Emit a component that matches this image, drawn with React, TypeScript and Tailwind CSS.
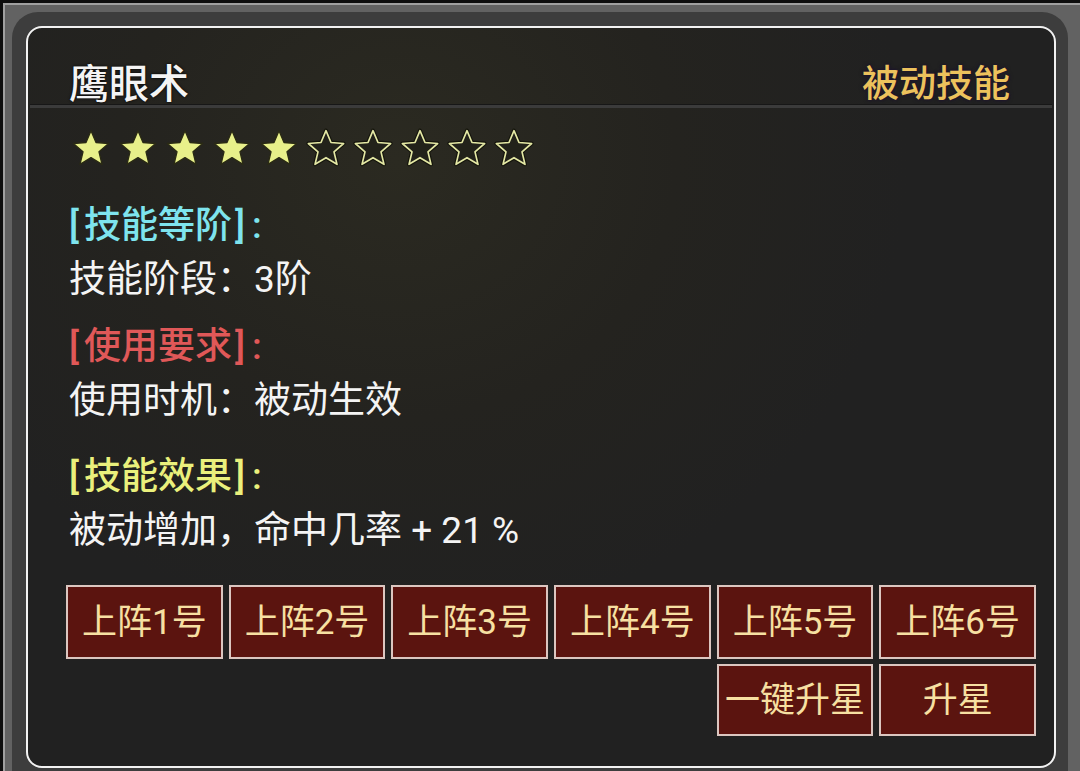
import React from "react";

const STAR =
  "M12 1.6l3 7.1 7.6.6-5.8 5 1.8 7.5L12 17.8l-6.6 4 1.8-7.5-5.8-5 7.6-.6z";

const Star = ({ filled }: { filled: boolean }) => (
  <svg width="40" height="40" viewBox="0 0 24 24">
    {filled ? (
      <path d={STAR} fill="#e8f08a" stroke="#2a2a14" strokeWidth="0.8" strokeLinejoin="round" />
    ) : (
      <>
        <path d={STAR} fill="none" stroke="#15150c" strokeWidth="2.4" strokeLinejoin="round" />
        <path d={STAR} fill="#22221a" stroke="#e4e8a4" strokeWidth="1" strokeLinejoin="round" />
      </>
    )}
  </svg>
);

// section heading like [技能等阶]:
const Heading = ({ text, color, className }: { text: string; color: string; className?: string }) => (
  <div className={`font-medium ${color} ${className ?? ""}`}>
    <span className="mr-[5px]">[</span>
    {text}
    <span className="ml-[3px] mr-[7px]">]</span>:
  </div>
);

const buttons = ["上阵1号", "上阵2号", "上阵3号", "上阵4号", "上阵5号", "上阵6号"];

const btn =
  "flex items-center justify-center border-2 border-[#dcc6c0] bg-[#5b140f] text-[35px] text-[#f7e0a2] leading-none whitespace-nowrap";

const App = () => {
  return (
    <div
      className="h-[771px] w-[1080px] overflow-hidden bg-[#0e0e0e] pl-[3px] pt-[3px]"
      style={{ fontFamily: 'Roboto, "Noto Sans CJK SC", sans-serif' }}
    >
      <div className="h-[768px] border-l-2 border-t-2 border-[#a0a0a0] bg-[#626262] pl-[7px] pr-[12px] pt-[7px]">
        <div className="h-[762px] rounded-t-[26px] bg-[#3d3d3d] pl-[14px] pr-[12px] pt-[14px]">
          <div className="flex h-[742px] flex-col rounded-[16px] border-2 border-[#f2f2f2] bg-[#212121] bg-[radial-gradient(ellipse_at_36%_18%,#2b2a21_0%,#24231f_30%,#212121_55%)]">
            <div className="flex h-[76px] items-center justify-between pl-[41px] pr-[44px] pt-[37px]">
              <span className="text-[40px] font-medium leading-[39px] text-[#f4f4f4] [text-shadow:0_0_3px_#000]">
                鹰眼术
              </span>
              <span className="text-[37px] font-medium leading-[39px] text-[#ecc25c] [text-shadow:0_0_2px_#1c1230,0_0_4px_#1c1230]">
                被动技能
              </span>
            </div>
            <div className="mx-[2px] h-[4px] border-t border-[#171717] bg-[#3b3b3b]" />

            <div className="pl-[38px] pr-[18px]">
              <div className="ml-[5px] mt-[20px] flex h-[40px] gap-[7px]">
                {Array.from({ length: 10 }).map((_, i) => (
                  <Star key={i} filled={i < 5} />
                ))}
              </div>

              <div className="mt-[31px] pl-[3px] text-[37px] leading-[54px] text-[#f4f4f4]">
                <Heading text="技能等阶" color="text-[#7ee4ee]" />
                <div>技能阶段：3阶</div>
                <Heading text="使用要求" color="text-[#e05858]" className="mt-[13px]" />
                <div>使用时机：被动生效</div>
                <Heading text="技能效果" color="text-[#eaf07c]" className="mt-[22px]" />
                <div>被动增加，命中几率 + 21 %</div>
              </div>

              <div className="mt-[27px] grid w-[970px] grid-cols-6 gap-x-[6px] gap-y-[5px]">
                {buttons.map((b) => (
                  <div key={b} className={`${btn} h-[74px]`}>
                    {b}
                  </div>
                ))}
                <div className={`${btn} col-start-5 h-[72px]`}>一键升星</div>
                <div className={`${btn} h-[72px]`}>升星</div>
              </div>
            </div>
          </div>
        </div>
      </div>
    </div>
  );
};

export default App;
